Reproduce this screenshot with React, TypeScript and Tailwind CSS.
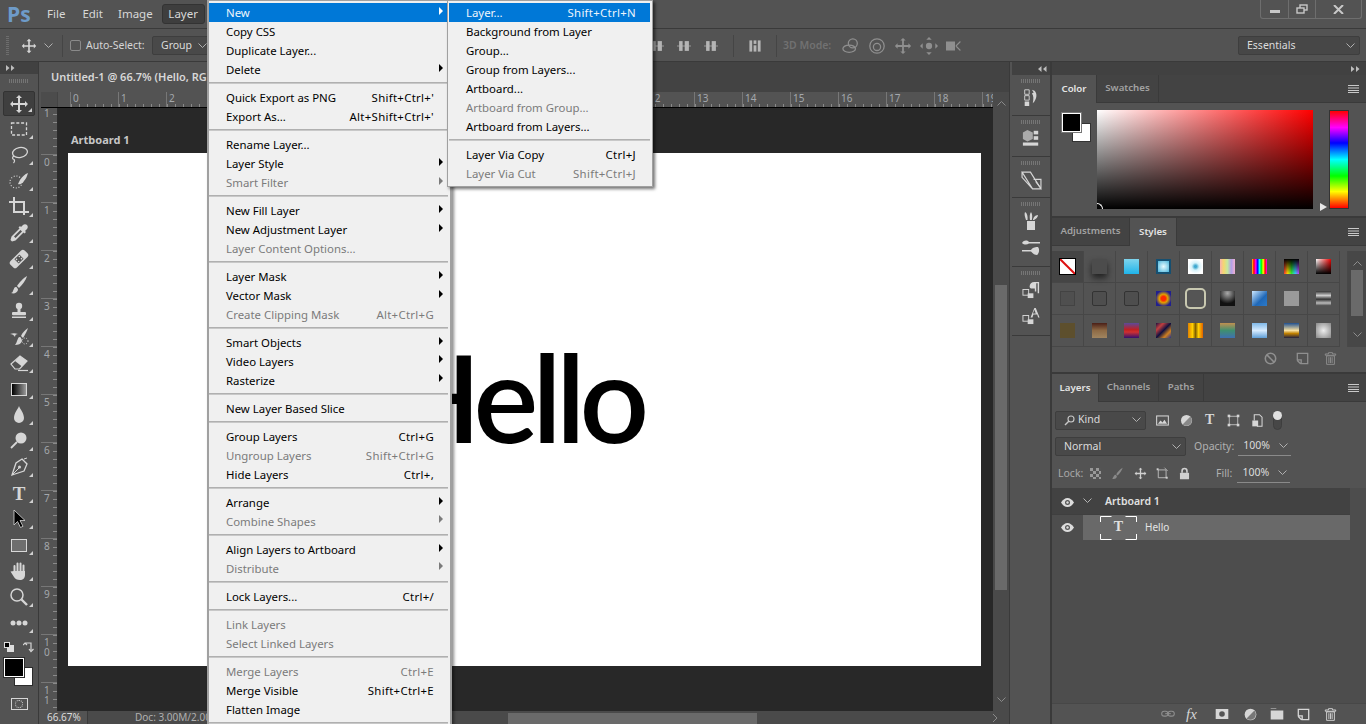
import React from "react";

function Ico({ size = 20, className = "", children }: { size?: number; className?: string; children: React.ReactNode }) {
  return (
    <svg width={size} height={size} viewBox="0 0 20 20" fill="currentColor" className={"shrink-0 " + className}>
      {children}
    </svg>
  );
}

const Chevron = ({ className = "" }: { className?: string }) => (
  <svg width="9" height="6" viewBox="0 0 9 6" fill="none" stroke="currentColor" className={"shrink-0 " + className}>
    <path d="M.5 .5l4 4 4-4" />
  </svg>
);

const MoveGlyph = () => (
  <path d="M10 1l3 3h-2v5h5V7l3 3-3 3v-2h-5v5h2l-3 3-3-3h2v-5H4v2l-3-3 3-3v2h5V4H7z" />
);

const tools: React.ReactNode[] = [
  <Ico><MoveGlyph /></Ico>,
  <Ico><rect x="2.500" y="4" width="15" height="12" fill="none" stroke="currentColor" strokeWidth="1.300" strokeDasharray="3 1.800" /></Ico>,
  <Ico><ellipse cx="11" cy="7.500" rx="7.500" ry="5" fill="none" stroke="currentColor" strokeWidth="1.300" transform="rotate(-10 11 7.500)" /><path d="M5 11c-2 1-2 3 0 3.500 1 1 .5 2.500-.5 3.500" fill="none" stroke="currentColor" strokeWidth="1.200" /></Ico>,
  <Ico><circle cx="7" cy="11" r="6" fill="none" stroke="currentColor" strokeWidth="1.200" strokeDasharray="1 1.800" /><path d="M19 2c-3 1-6 4-8 7l-2 4c2 1 5-1 6-3 2-2 3-5 4-8z" /></Ico>,
  <Ico><path d="M0 5h15v13M5 0v15h15" fill="none" stroke="currentColor" strokeWidth="2" /></Ico>,
  <Ico><path d="M14 2c1-1 3-1 4 0s1 3 0 4l-2 2 1 1-1.500 1.500-1-1-8 8-3.500 1-1.500-1.500 1-3.500 8-8-1-1L11 3l1 1z" /><path d="M5 13.500l6.500-6.500 1.500 1.500-6.500 6.500z" fill="#535353" /></Ico>,
  <Ico><g transform="rotate(45 10 10)"><rect x="5.500" y="0" width="9" height="20" rx="2.500" /><rect x="7" y="6.500" width="6" height="7" fill="#535353" /><circle cx="8.500" cy="8" r=".8" /><circle cx="11.500" cy="8" r=".8" /><circle cx="8.500" cy="12" r=".8" /><circle cx="11.500" cy="12" r=".8" /></g></Ico>,
  <Ico><path d="M18 1C14 3 10 8 8 11l2 2c3-3 7-8 8-12z" /><path d="M7 12c-2 0-2 2-3 4-.3 1-1 2-2 2 3 1 6 0 7-3 0-1-1-3-2-3z" /></Ico>,
  <Ico><circle cx="10" cy="5" r="3.200" /><rect x="8.500" y="7" width="3" height="4" /><rect x="3" y="11" width="14" height="3.200" rx="1" /><rect x="3" y="15.500" width="14" height="1.500" /></Ico>,
  <Ico><path d="M19 1c-3 2-6 5-7 8l2 2c2-3 4-7 5-10z" /><path d="M11 10c-2 0-2 2-3 4-.3 1-1 3-2 4 3 0 6-1 7-4 0-1-1-4-2-4z" /><path d="M1 7c3-1 5-1 8 0-2 0-3 1-3 3-1-2-3-3-5-3z" /><circle cx="16" cy="14" r="3" fill="none" stroke="currentColor" strokeDasharray="1 1.500" /></Ico>,
  <Ico><path d="M2 11L11 3l7 5-7.500 8H6z" fill="none" stroke="currentColor" strokeWidth="1.200" /><path d="M11 3l7 5-5 5.500-7-5.500z" /><path d="M9 17.500h10" stroke="currentColor" strokeWidth="1.200" /></Ico>,
  <div className="w-[16px] h-[13px] border border-[#d8d8d8] bg-[linear-gradient(to_right,#000,#9a9a9a)]" />,
  <Ico><path d="M10 1c1 3 5 7 5 12a5 5 0 01-10 0c0-5 4-9 5-12z" /></Ico>,
  <Ico><circle cx="12" cy="7" r="5.500" /><path d="M8 11l-6 6" stroke="currentColor" strokeWidth="1.800" /></Ico>,
  <Ico><path d="M13 2l5 5-3 7-9 3-3 1 1-3 3-9z" fill="none" stroke="currentColor" strokeWidth="1.300" /><path d="M4 17l6-6M15 2l3-1" stroke="currentColor" /><circle cx="10.500" cy="10" r="1.500" /></Ico>,
  <span className="font-['Liberation_Serif',serif] font-bold text-[19px] leading-none">T</span>,
  <Ico><path d="M5 1v15l3.500-3.500 3 6 2.500-1.200-3-5.800H16z" fill="#000" stroke="#d8d8d8" strokeWidth=".8" /></Ico>,
  <div className="w-[16px] h-[13px] border border-[#d8d8d8] bg-[#6e6e6e]" />,
  <Ico><path d="M5.500 11V5M8.500 10V2.500M11.500 10V2.500M14.500 11V4.500" stroke="currentColor" strokeWidth="2" strokeLinecap="round" /><path d="M1.500 10.500L5 10h11v4c0 3-2 5-5 5-3 0-5-1-6-3z" /></Ico>,
  <Ico><circle cx="8" cy="8" r="6" fill="none" stroke="currentColor" strokeWidth="1.500" /><path d="M12.500 12.500L18 18" stroke="currentColor" strokeWidth="2.400" /></Ico>,
  <Ico><circle cx="4" cy="10" r="2.500" /><circle cx="10" cy="10" r="2.500" /><circle cx="16" cy="10" r="2.500" /></Ico>,
];

function ToolsBar() {
  return (
    <div className="w-[39px] shrink-0 flex flex-col items-center border-r border-[#3a3a3a] bg-[#535353]">
      <div className="w-full h-[12px] bg-[#414141] flex items-center pl-[6px] text-[#bdbdbd] text-[7px] leading-none">
        <svg width="9" height="6" viewBox="0 0 9 6" fill="currentColor"><path d="M0 0l3.500 3L0 6zM5 0l3.500 3L5 6z" /></svg>
      </div>
      <Grip className="mt-[5px] mb-[8px] w-[20px]" />
      {tools.map((t, i) => (
        <div
          key={i}
          className={
            "relative w-[32px] flex items-center justify-center text-[#d6d6d6] " +
            (i === 0 ? "h-[25px] bg-[#3f3f3f] border border-[#333] rounded-[2px]" : "h-[26px]")
          }
        >
          {t}
          <span className="absolute right-[2px] bottom-[3px] w-0 h-0 border-l-[4px] border-l-transparent border-b-[4px] border-b-[#cfcfcf]" />
        </div>
      ))}
      <div className="w-full flex items-center justify-between px-[4px] mt-[5px] h-[12px] text-[#d6d6d6]">
        <div className="relative w-[10px] h-[10px]">
          <span className="absolute right-0 bottom-0 w-[7px] h-[7px] bg-[#ddd]" />
          <span className="absolute left-0 top-0 w-[6px] h-[6px] bg-black border border-[#ddd]" />
        </div>
        <svg width="11" height="11" viewBox="0 0 11 11" fill="none" stroke="currentColor" strokeWidth="1.200"><path d="M2 1.500v0M0 3l2-2 2 2M2 1h6v7M6 7l2 2.500L10.500 7" /></svg>
      </div>
      <div className="relative w-full h-[28px] mt-[5px]">
        <span className="absolute left-[14px] top-[9px] w-[19px] h-[19px] bg-white border border-[#2c2c2c]" />
        <span className="absolute left-[4px] top-0 w-[20px] h-[19px] bg-black border border-white outline outline-[#2c2c2c]" />
      </div>
      <div className="mt-[12px] w-[17px] h-[12px] border border-[#d6d6d6] flex items-center justify-center">
        <span className="w-[8px] h-[8px] rounded-full border border-dotted border-[#d6d6d6]" />
      </div>
    </div>
  );
}

function Grip({ className = "" }: { className?: string }) {
  return <div className={"h-[4px] bg-[repeating-linear-gradient(to_right,#757575_0,#757575_1px,transparent_1px,transparent_2px)] " + className} />;
}

function PanelMenu() {
  return (
    <svg width="11" height="8" viewBox="0 0 11 8" fill="#c9c9c9" className="ml-auto mr-[7px] self-center">
      <rect width="11" height="1" /><rect y="2.500" width="11" height="1" /><rect y="5" width="11" height="1" /><rect y="7" width="11" height="1" />
    </svg>
  );
}

function Tabs({ tabs, active, widths }: { tabs: string[]; active: number; widths: string[] }) {
  return (
    <div className="h-[28px] flex bg-[#434343] border-b border-[#3a3a3a] shrink-0">
      {tabs.map((t, i) => (
        <div
          key={t}
          className={
            "flex items-center justify-center text-[9.700px] font-semibold border-r border-[#3a3a3a] " +
            widths[i] +
            (i === active ? " bg-[#535353] text-[#e4e4e4] h-[28px]" : " text-[#a2a2a2]")
          }
        >
          {t}
        </div>
      ))}
      <PanelMenu />
    </div>
  );
}

const swatches: string[] = [
  "bg-white",
  "bg-[#4c4c4c] shadow-[0_4px_6px_#222]",
  "bg-[linear-gradient(to_bottom,#7fd4ec,#1fb4ea)]",
  "bg-[radial-gradient(circle,#e8fbff,#4ab4da)] border-2 border-[#164f70]",
  "bg-[radial-gradient(circle,#3fa9d0_10%,#d4f2fa_35%,#fff_70%)]",
  "bg-[linear-gradient(to_right,#f7b0b0,#f5d76e,#c4e6a0,#b0a0e8,#f0b0d0)]",
  "bg-[linear-gradient(to_right,#f9d423,#f00,#f0f,#00f,#0ff,#0f0,#ff0,#f00,#f0f)]",
  "bg-[linear-gradient(to_bottom,#000,transparent),linear-gradient(to_right,#f33,#fd0,#3e3,#3cf,#c3f)]",
  "bg-[linear-gradient(to_bottom,transparent,#000),linear-gradient(to_right,#fff,#e00)]",
  "bg-[#4f4f4f] border border-[#434343]",
  "bg-[#4e4e4e] border border-[#333] rounded-[2px]",
  "bg-[#4e4e4e] border border-[#333] rounded-[2px]",
  "bg-[radial-gradient(circle,#ff2a00_20%,#e0a000_40%,#20208f_75%)]",
  "bg-[#555] outline-2 outline-offset-1 outline-[#c8c8b0] rounded-[2px]",
  "bg-[radial-gradient(circle_at_50%_15%,#aaa,#111_70%)]",
  "bg-[linear-gradient(135deg,#cde8ff,#1f68b8_60%,#2c7ac9)]",
  "bg-[#9a9a9a]",
  "bg-[linear-gradient(to_bottom,#333,#ccc_30%,#333_55%,#bbb_80%,#444)]",
  "bg-[#5d4f2d]",
  "bg-[linear-gradient(to_bottom,#4a1f17,#8e6a45_50%,#a08560)]",
  "bg-[linear-gradient(to_bottom,#5a4a9a,#c02020_45%,#d03030_60%,#301070)]",
  "bg-[linear-gradient(135deg,#201040,#c04040,#101040,#d08020,#203090)]",
  "bg-[linear-gradient(to_right,#e08000,#ffd000_30%,#806000_50%,#ffd000_70%,#e06000)]",
  "bg-[linear-gradient(to_bottom,#c09050,#3f8f70_50%,#3f70b0)]",
  "bg-[linear-gradient(to_bottom,#7fb8e8,#d8ecff_50%,#5f9fd8)]",
  "bg-[linear-gradient(to_bottom,#1f4f8f,#f8e0a0_50%,#c08000_70%,#202040)]",
  "bg-[radial-gradient(circle,#eee,#888)]",
];

function ColorPanel() {
  return (
    <div className="h-[141px] shrink-0 flex flex-col">
      <Tabs tabs={["Color", "Swatches"]} active={0} widths={["w-[45px]", "w-[62px]"]} />
      <div className="flex-1 flex pt-[7px] pl-[10px]">
        <div className="relative w-[35px] h-[32px] mt-[3px]">
          <span className="absolute left-[10px] top-[10px] w-[19px] h-[19px] bg-white border border-[#333]" />
          <span className="absolute left-0 top-0 w-[19px] h-[19px] bg-black border border-white outline outline-[#777]" />
        </div>
        <div className="w-[216px] h-[99px] relative bg-[linear-gradient(to_top,#000,transparent),linear-gradient(to_right,#fff,#f00)]">
          <span className="absolute left-0 bottom-0 w-[6px] h-[6px] rounded-tr-full border-t border-r border-white" />
        </div>
        <div className="relative ml-[16px] w-[20px] h-[99px] bg-[linear-gradient(to_bottom,#f00,#f0f_17%,#00f_33%,#0ff_50%,#0f0_67%,#ff0_83%,#f00)] border border-[#333]">
          <span className="absolute left-[-10px] bottom-[-3px] w-0 h-0 border-y-[4px] border-y-transparent border-l-[7px] border-l-[#e8e8e8]" />
        </div>
      </div>
    </div>
  );
}

function StylesPanel() {
  return (
    <div className="h-[154px] shrink-0 flex flex-col border-t-2 border-[#3a3a3a]">
      <Tabs tabs={["Adjustments", "Styles"]} active={1} widths={["w-[78px]", "w-[47px]"]} />
      <div className="flex h-[96px] mt-[5px]">
        <div className="grid grid-cols-[repeat(9,32px)] grid-rows-[repeat(3,32px)] w-[296px] border-r border-[#484848]">
          <div className="bg-[#454545] border-r border-b border-[#474747] flex items-center justify-center">
            <div className="relative w-[17px] h-[17px] bg-white border border-black overflow-hidden">
              <svg width="17" height="17" viewBox="0 0 17 17" className="absolute -left-px -top-px"><path d="M0 0l17 17" stroke="#d11" strokeWidth="2" /></svg>
            </div>
          </div>
          {swatches.slice(1).map((s, i) => (
            <div key={i} className="border-r border-b border-[#474747] flex items-center justify-center">
              <div className={"w-[15px] h-[15px] " + s} />
            </div>
          ))}
        </div>
        <div className="ml-auto w-[18px] bg-[#474747] flex flex-col items-center text-[#8d8d8d]">
          <Chevron className="mt-[9px] rotate-180" />
          <div className="w-[12px] h-[46px] bg-[#6a6a6a] mt-[4px]" />
          <Chevron className="mt-[16px]" />
        </div>
      </div>
      <div className="flex-1 flex items-center text-[#8f8f8f] pl-[212px] gap-[16px]">
        <Ico size={13}><circle cx="10" cy="10" r="8" fill="none" stroke="currentColor" strokeWidth="2.400" /><path d="M4.500 4.500l11 11" stroke="currentColor" strokeWidth="2.400" /></Ico>
        <Ico size={13} className="ml-[3px]"><path d="M2 2h16v16H8v-6H2zM2 13l5 5" fill="none" stroke="currentColor" strokeWidth="2" /></Ico>
        <Trash className="-ml-[1px]" />
      </div>
    </div>
  );
}

function Trash({ className = "" }: { className?: string }) {
  return (
    <Ico size={13} className={className}>
      <path d="M7 1h6v2h5v2H2V3h5zM4 6h12v13H4zM7.500 8v9M10 8v9M12.500 8v9" fill="none" stroke="currentColor" strokeWidth="1.400" />
    </Ico>
  );
}

function Select({ label, className, icon }: { label: string; className: string; icon?: React.ReactNode }) {
  return (
    <div className={"h-[19px] flex items-center border border-[#3e3e3e] rounded-[2px] text-[#dcdcdc] text-[10.500px] " + className}>
      {icon}
      <span>{label}</span>
      <Chevron className="ml-auto mr-[4px] text-[#b0b0b0]" />
    </div>
  );
}

function Underlined({ value }: { value: string }) {
  return (
    <div className="w-[53px] h-[18px] flex items-center pl-[5px] border-b border-[#8a8a8a] text-[#dcdcdc] text-[10.500px]">
      {value}
      <Chevron className="ml-auto mr-[3px] text-[#b0b0b0]" />
    </div>
  );
}

const Eye = () => (
  <svg width="13" height="9" viewBox="0 0 13 9" className="shrink-0">
    <path d="M0 4.500C2 1.500 4 0 6.500 0S11 1.500 13 4.500C11 7.500 9 9 6.500 9S2 7.500 0 4.500z" fill="#dcdcdc" />
    <circle cx="6.500" cy="4.500" r="2.500" fill="#555" />
    <circle cx="6.500" cy="4.500" r="1.200" fill="#dcdcdc" />
  </svg>
);

function LayersPanel() {
  return (
    <div className="flex-1 flex flex-col border-t-2 border-[#3a3a3a] mt-[2px]">
      <Tabs tabs={["Layers", "Channels", "Paths"]} active={0} widths={["w-[47px]", "w-[60px]", "w-[45px]"]} />
      <div className="h-[34px] pt-[2px] flex items-center pl-[3px] text-[#d6d6d6]">
        <Select
          label="Kind"
          className="w-[91px] bg-[#494949]"
          icon={
            <svg width="11" height="11" viewBox="0 0 11 11" fill="none" stroke="#c8c8c8" strokeWidth="1.100" className="ml-[8px] mr-[3px]"><circle cx="7" cy="4" r="3" /><path d="M5 6l-4 4" strokeWidth="1.500" /></svg>
          }
        />
        <Ico size={13} className="ml-[10px]"><rect x="1" y="3" width="18" height="14" fill="none" stroke="currentColor" strokeWidth="1.600" /><path d="M3 15l4-5 3 3 3-4 4 6z" /></Ico>
        <Ico size={13} className="ml-[11px]"><circle cx="10" cy="10" r="8.500" /><path d="M16 4L4 16a8.500 8.500 0 0012-12z" fill="#888" /></Ico>
        <span className="ml-[12px] w-[13px] font-['Liberation_Serif',serif] font-bold text-[14px] leading-none">T</span>
        <Ico size={13} className="ml-[9px]"><path d="M3.500 3.500h13v13h-13z" fill="none" stroke="currentColor" strokeWidth="1.200" /><rect x="1" y="1" width="4" height="4" /><rect x="15" y="1" width="4" height="4" /><rect x="1" y="15" width="4" height="4" /><rect x="15" y="15" width="4" height="4" /></Ico>
        <Ico size={13} className="ml-[11px]"><path d="M5 10V1h8l4 4v14H9" fill="none" stroke="currentColor" strokeWidth="1.600" /><rect x="2" y="10" width="9" height="9" /></Ico>
        <div className="ml-[9px] w-[9px] h-[19px] rounded-full border border-[#3e3e3e] bg-[#474747] relative">
          <span className="absolute -left-px -top-px w-[9px] h-[9px] rounded-full bg-[#e0e0e0]" />
        </div>
      </div>
      <div className="h-[20px] pt-[1px] flex items-center pl-[3px]">
        <Select label="Normal" className="w-[131px] pl-[8px] bg-[#494949]" />
        <span className="ml-[8px] text-[#b0b0b0] text-[10.500px]">Opacity:</span>
        <div className="ml-[4px]"><Underlined value="100%" /></div>
      </div>
      <div className="h-[32px] pt-[3px] flex items-center pl-[6px] text-[#d0d0d0]">
        <span className="text-[#a8a8a8] text-[10.500px] w-[30px]">Lock:</span>
        <div className="ml-[2px] w-[11px] h-[11px] bg-[conic-gradient(#555_25%,#999_0_50%,#555_0_75%,#999_0)] bg-[length:6px_6px]" />
        <Ico size={13} className="ml-[10px] text-[#8a8a8a]"><path d="M18 1C14 3 10 8 8 11l2 2c3-3 7-8 8-12zM7 12c-2 0-3 3-5 6 3 1 6 0 7-3 0-1-1-3-2-3z" /></Ico>
        <Ico size={13} className="ml-[10px]"><MoveGlyph /></Ico>
        <Ico size={13} className="ml-[9px]"><path d="M3.500 4.500h12v12h-12z" fill="none" stroke="currentColor" strokeWidth="1.200" /><rect x="1" y="2" width="3" height="3" /><rect x="15" y="15" width="3" height="3" /><path d="M13 1l5 5" stroke="currentColor" /></Ico>
        <Ico size={13} className="ml-[9px]"><path d="M5 9V6a5 5 0 0110 0v3h-2.500V6a2.500 2.500 0 00-5 0v3z" /><rect x="3" y="9" width="14" height="10" rx="1" /></Ico>
        <span className="ml-[25px] text-[#b0b0b0] text-[10.500px]">Fill:</span>
        <div className="ml-[5px]"><Underlined value="100%" /></div>
      </div>
      <div className="flex-1 bg-[#4d4d4d] flex flex-col">
        <div className="w-[298px] h-[26px] pt-[2px] bg-[#424242] flex items-center">
          <div className="w-[31px] flex justify-center"><Eye /></div>
          <Chevron className="text-[#b5b5b5] -mt-[2px]" />
          <span className="ml-[13px] text-[#e0e0e0] font-semibold text-[10.500px]">Artboard 1</span>
        </div>
        <div className="w-[298px] h-[26px] flex items-center border-t border-[#3f3f3f]">
          <div className="w-[31px] flex justify-center"><Eye /></div>
          <div className="flex-1 h-full bg-[#696969] flex items-center">
            <svg width="37" height="24" viewBox="0 0 37 24" fill="none" stroke="#fff" className="ml-[17px] shrink-0">
              <path d="M.5 6V.5H11.500M25.500 .5H36.500V6M.5 18v5.500H11.500M25.500 23.500H36.500V18" />
              <text x="18.500" y="15" textAnchor="middle" stroke="none" fill="#e0e0e0" fontFamily="Liberation Serif" fontWeight="700" fontSize="14">T</text>
            </svg>
            <span className="ml-[8px] text-[#e4e4e4] text-[10px]">Hello</span>
          </div>
        </div>
      </div>
      <div className="h-[21px] border-t border-[#474747] flex items-center text-[#d6d6d6] pl-[109px]">
        <Ico size={14} className="text-[#8f8f8f]"><rect x="1" y="6" width="9" height="7" rx="3.500" fill="none" stroke="currentColor" strokeWidth="1.500" /><rect x="10" y="6" width="9" height="7" rx="3.500" fill="none" stroke="currentColor" strokeWidth="1.500" /><path d="M6 9.500h8" stroke="currentColor" strokeWidth="1.500" /></Ico>
        <span className="ml-[11px] w-[19px] font-['Liberation_Serif',serif] italic text-[15px] leading-none">fx</span>
        <Ico size={14} className="ml-[10px]"><path fillRule="evenodd" d="M1 3h18v14H1zM10 6a4 4 0 100 8 4 4 0 000-8z" /></Ico>
        <Ico size={13} className="ml-[15px]"><circle cx="10" cy="10" r="9" /><path d="M16 4L4 16a8.500 8.500 0 0012-12z" fill="#777" /></Ico>
        <Ico size={14} className="ml-[13px]"><path d="M1 2h8v1H1zM1 5h18v13H1z" /></Ico>
        <Ico size={13} className="ml-[13px]"><path d="M2 2h16v16H8v-6H2zM2 13l5 5" fill="none" stroke="currentColor" strokeWidth="2" /></Ico>
        <Trash className="ml-[14px]" />
      </div>
    </div>
  );
}

const dockGroups: { h: string; items: React.ReactNode[] }[] = [
  { h: "h-[41px]", items: [<Ico size={18}><path d="M3 2h5v5H3zM3 8.500h5v5H3z" fill="none" stroke="currentColor" /><rect x="3" y="15" width="5" height="5" /><path d="M11 2l3 1c3 3 3 9-2 14 1-5 1-9-1-11l2-1z" /></Ico>] },
  { h: "h-[41px]", items: [<Ico size={18}><path d="M6 1l6 3v7l-6 3-5-3V4z" fill="#aaa" /><rect x="13" y="2" width="5" height="4" /><rect x="13" y="8" width="5" height="4" /><rect x="1" y="15" width="17" height="3.500" /></Ico>] },
  { h: "h-[41px]", items: [<Ico size={21}><path d="M1 2h8l10 16h-8zM1 2l0 5 10 11M12 9h7v9" fill="none" stroke="currentColor" strokeWidth="1.100" /><path d="M14 11l4 5" stroke="currentColor" /></Ico>] },
  {
    h: "h-[69px]",
    items: [
      <Ico size={20}><path d="M4 1c2 1 3 4 2.500 8H5C4 6 3 3 4 1zM10 1c1.500 2 1.500 5 .8 8H9C8.500 6 8.500 3 10 1zM17 4c0 2-2 4-4 5h-1c0-2 2-5 5-5z" /><rect x="6" y="10" width="8" height="9" /></Ico>,
      <Ico size={20}><path d="M1 5c2-3 5-3 7-1h11v1.500H8C6 7 3 7 1 5zM1 12h9c2-3 5-3 7-3 2 2 1 7-1 8-2 0-4-1-6-3.500H1z" /></Ico>,
    ],
  },
  {
    h: "h-[69px]",
    items: [
      <Ico size={19}><rect x="1" y="10" width="6" height="6" fill="none" stroke="currentColor" /><rect x="6" y="14" width="6" height="5" /><path d="M8 7c0-3 2-5 5-5h5v12h-1.500V3.500H15V12h-1.500V9C10 9 8 9 8 7z" /></Ico>,
      <Ico size={19}><rect x="1" y="10" width="6" height="6" fill="none" stroke="currentColor" /><rect x="6" y="14" width="6" height="5" /><path d="M9 12l4-10h1.500l4 10h-1.500l-1-3h-4l-1 3zM11.500 8h3l-1.500-4z" /></Ico>,
    ],
  },
];

function Dock() {
  return (
    <div className="w-[38px] shrink-0 flex flex-col">
      <div className="h-[13px] bg-[#414141] flex items-center justify-end pr-[3px]">
        <svg width="9" height="6" viewBox="0 0 9 6" fill="#bdbdbd"><path d="M3.500 0L0 3l3.500 3zM8.500 0L5 3l3.500 3z" /></svg>
      </div>
      {dockGroups.map((g, i) => (
        <div key={i} className={"flex flex-col items-center border-b border-[#3a3a3a] text-[#d6d6d6] " + g.h}>
          <Grip className="w-[20px] mt-[4px] mb-[5px]" />
          <div className="flex flex-col items-center gap-[7px]">{g.items}</div>
        </div>
      ))}
    </div>
  );
}

type Item = { t: string; s?: string; a?: boolean; off?: boolean; hi?: boolean };

const menu: Item[][] = [
  [{ t: "New", a: true, hi: true }, { t: "Copy CSS" }, { t: "Duplicate Layer..." }, { t: "Delete", a: true }],
  [{ t: "Quick Export as PNG", s: "Shift+Ctrl+'" }, { t: "Export As...", s: "Alt+Shift+Ctrl+'" }],
  [{ t: "Rename Layer..." }, { t: "Layer Style", a: true }, { t: "Smart Filter", a: true, off: true }],
  [{ t: "New Fill Layer", a: true }, { t: "New Adjustment Layer", a: true }, { t: "Layer Content Options...", off: true }],
  [{ t: "Layer Mask", a: true }, { t: "Vector Mask", a: true }, { t: "Create Clipping Mask", s: "Alt+Ctrl+G", off: true }],
  [{ t: "Smart Objects", a: true }, { t: "Video Layers", a: true }, { t: "Rasterize", a: true }],
  [{ t: "New Layer Based Slice" }],
  [{ t: "Group Layers", s: "Ctrl+G" }, { t: "Ungroup Layers", s: "Shift+Ctrl+G", off: true }, { t: "Hide Layers", s: "Ctrl+," }],
  [{ t: "Arrange", a: true }, { t: "Combine Shapes", a: true, off: true }],
  [{ t: "Align Layers to Artboard", a: true }, { t: "Distribute", a: true, off: true }],
  [{ t: "Lock Layers...", s: "Ctrl+/" }],
  [{ t: "Link Layers", off: true }, { t: "Select Linked Layers", off: true }],
  [{ t: "Merge Layers", s: "Ctrl+E", off: true }, { t: "Merge Visible", s: "Shift+Ctrl+E" }, { t: "Flatten Image" }],
];

const submenu: Item[][] = [
  [
    { t: "Layer...", s: "Shift+Ctrl+N", hi: true },
    { t: "Background from Layer" },
    { t: "Group..." },
    { t: "Group from Layers..." },
    { t: "Artboard..." },
    { t: "Artboard from Group...", off: true },
    { t: "Artboard from Layers..." },
  ],
  [{ t: "Layer Via Copy", s: "Ctrl+J" }, { t: "Layer Via Cut", s: "Shift+Ctrl+J", off: true }],
];

function MenuRow({ item }: { item: Item }) {
  return (
    <div
      className={
        "h-[18.900px] flex items-center pl-[17px] " +
        (item.hi ? "bg-[#0078d7] " : "") +
        (item.off ? "text-[#7b7b7b]" : item.hi ? "text-[#eef5fc]" : "text-black")
      }
    >
      <span className="pt-[1px]">{item.t}</span>
      {item.s ? <span className="ml-auto pt-[1px] tracking-[0.3px]">{item.s}</span> : null}
      <span className={"flex justify-center shrink-0 w-[14px]" + (item.s ? "" : " ml-auto")}>
        {item.a ? (
          <span className={"w-0 h-0 border-y-[4px] border-y-transparent border-l-[4px] -mt-[3px] " + (item.hi ? "border-l-white" : item.off ? "border-l-[#7b7b7b]" : "border-l-black")} />
        ) : null}
      </span>
    </div>
  );
}

function MenuSep() {
  return (
    <div className="h-[9.250px] flex items-center">
      <div className="w-full h-[2px] bg-[#b0b0b0] border-b border-[#c8c8c8]" />
    </div>
  );
}

function LayerMenus() {
  return (
    <>
      <div className="absolute left-[207px] top-0 w-[245px] h-[730px] bg-[#f0f0f0] border-x-2 border-t border-[#a0a0a0] pt-[2px] pr-[2px] shadow-[2px_0_3px_rgba(0,0,0,0.45)] font-['Noto_Sans',sans-serif] text-[11.400px] leading-none z-10">
        {menu.map((g, i) => (
          <div key={i}>
            {i > 0 ? <MenuSep /> : null}
            {g.map((it) => (
              <MenuRow key={it.t} item={it} />
            ))}
          </div>
        ))}
        <MenuSep />
      </div>
      <div className="absolute left-[447px] top-0 w-[206px] h-[187px] bg-[#f0f0f0] border border-[#a0a0a0] pt-[2px] pl-[1px] pr-[2px] shadow-[2px_2px_3px_rgba(0,0,0,0.55)] font-['Noto_Sans',sans-serif] text-[11.400px] leading-none z-20">
        {submenu.map((g, i) => (
          <div key={i}>
            {i > 0 ? <MenuSep /> : null}
            {g.map((it) => (
              <MenuRow key={it.t} item={it} />
            ))}
          </div>
        ))}
      </div>
    </>
  );
}

const rulerTicksH = "bg-[repeating-linear-gradient(to_right,#8a8a8a_0,#8a8a8a_1px,transparent_1px,transparent_8px)]";
const rulerTicksV = "bg-[repeating-linear-gradient(to_bottom,#8a8a8a_0,#8a8a8a_1px,transparent_1px,transparent_8px)]";

function HRuler() {
  return (
    <div className="h-[16px] flex bg-[#535353] overflow-hidden shrink-0 border-b border-black">
      <div className="w-[17px] shrink-0 border-r border-[#444] bg-[#4c4c4c]" />
      <div className="w-[12px] shrink-0" />
      {Array.from({ length: 20 }, (_, i) => (
        <div key={i} className="w-[48px] shrink-0 h-full border-l border-[#777] flex flex-col">
          <span className="h-[12px] pl-[2px] text-[10px] leading-[12px] text-[#a4a8ac]">{i}</span>
          <div className={"h-[3px] " + rulerTicksH} />
        </div>
      ))}
    </div>
  );
}

function VRuler() {
  const labels = ["1", "0", "1", "2", "3", "4", "5", "6", "7", "8", "9", "10", "11", "12"];
  return (
    <div className="w-[17px] shrink-0 bg-[#535353] overflow-hidden flex flex-col border-r border-[#2a2a2a]">
      <div className="-mt-[2px]">
        {labels.map((l, i) => (
          <div key={i} className={"h-[48px] flex justify-between " + (i === 0 ? "" : "border-t border-[#777]")}>
            <span className="w-[10px] pl-[3px] pt-[2px] text-[10px] leading-[10px] text-[#a4a8ac] flex flex-col">
              {l.split("").map((c, k) => (
                <span key={k}>{c}</span>
              ))}
            </span>
            <div className={"w-[4px] " + rulerTicksV} />
          </div>
        ))}
      </div>
    </div>
  );
}

function Document() {
  return (
    <div className="flex-1 min-w-0 flex flex-col border-r border-[#3a3a3a]">
      <div className="h-[30px] shrink-0 bg-[#434343] flex">
        <div className="w-[400px] bg-[#535353] flex items-center pl-[10px] text-[#d8d8d8] font-semibold text-[11px]">
          Untitled-1 @ 66.7% (Hello, RGB/8)
        </div>
      </div>
      <div className="flex-1 min-h-0 flex">
        <div className="flex-1 min-w-0 flex flex-col">
          <HRuler />
          <div className="flex-1 min-h-0 flex">
            <VRuler />
            <div className="flex-1 bg-[#282828] pt-[24px] pl-[10px] pr-[12px]">
              <div className="h-[21px] pl-[3px] text-[11px] font-bold text-[#c6c6c6]">Artboard 1</div>
              <div className="h-[513px] bg-white flex items-center justify-center pb-[26px] pr-[18px] font-['Lato',sans-serif] font-semibold text-[122px] text-black tracking-[-6px]">
                Hello
              </div>
            </div>
          </div>
        </div>
        <div className="w-[16px] shrink-0 bg-[#4a4a4a] flex flex-col items-center text-[#8a8a8a]">
          <Chevron className="mt-[8px] rotate-180" />
          <div className="w-[12px] h-[305px] bg-[#6a6a6a] mt-[179px]" />
          <Chevron className="mt-auto mb-[8px]" />
        </div>
      </div>
      <div className="h-[13px] shrink-0 bg-[#4a4a4a] flex items-stretch text-[#c8c8c8] text-[10px] leading-[13px]">
        <div className="w-[47px] pl-[6px] border-r border-[#3a3a3a] bg-[#535353] text-[#dcdcdc]">66.67%</div>
        <span className="ml-[47px] w-[120px] text-[#b0b0b0] whitespace-nowrap">Doc: 3.00M/2.00M</span>
        <div className="w-[249px] ml-[253px] mt-[2px] bg-[#6a6a6a]" />
        <div className="ml-auto mr-[9px] flex items-center text-[#8a8a8a]">
          <Chevron className="-rotate-90" />
        </div>
      </div>
    </div>
  );
}

const OptIcon = ({ children, w = "w-[27px]" }: { children: React.ReactNode; w?: string }) => (
  <div className={"flex justify-center " + w}>{children}</div>
);

function OptionsBar() {
  return (
    <div className="h-[33px] pt-[1px] shrink-0 flex items-center border-b border-[#3a3a3a] bg-[#535353] text-[#d6d6d6] text-[10.500px]">
      <div className="ml-[6px] w-[3px] h-[20px] bg-[repeating-linear-gradient(to_bottom,#6d6d6d_0,#6d6d6d_1px,transparent_1px,transparent_2px)]" />
      <Ico size={16} className="ml-[12px]"><MoveGlyph /></Ico>
      <Chevron className="ml-[7px] text-[#b0b0b0]" />
      <div className="ml-[9px] w-px h-[22px] bg-[#454545]" />
      <div className="ml-[7px] w-[11px] h-[11px] border border-[#8a8a8a] rounded-[2px]" />
      <span className="ml-[5px] w-[54px] whitespace-nowrap">Auto-Select:</span>
      <Select label="Group" className="ml-[12px] w-[60px] pl-[8px] bg-[#494949]" />
      <div className="ml-[431px] flex items-center text-[#b4b4b4]">
        {[0, 1, 2].map((i) => (
          <OptIcon key={i}>
            <Ico size={14}><rect x="3" y="3" width="5" height="14" /><rect x="11" y="3" width="6" height="14" /><path d="M0 10h20" stroke="currentColor" /></Ico>
          </OptIcon>
        ))}
        <div className="w-px h-[22px] bg-[#454545] ml-[9px]" />
        <OptIcon w="w-[42px]">
          <Ico size={14}><rect x="2" y="2" width="4" height="16" /><rect x="8" y="2" width="4" height="5" /><rect x="8" y="9" width="4" height="9" /><rect x="14" y="2" width="4" height="16" /></Ico>
        </OptIcon>
        <div className="w-px h-[22px] bg-[#454545]" />
        <span className="ml-[6px] w-[59px] text-[#717171] font-semibold whitespace-nowrap">3D Mode:</span>
        <div className="flex items-center gap-[8px] text-[#8f8f8f]">
          <Ico size={18}><circle cx="12" cy="7" r="5" fill="none" stroke="currentColor" strokeWidth="1.400" /><ellipse cx="8" cy="13" rx="7" ry="4" fill="none" stroke="currentColor" strokeWidth="1.400" /></Ico>
          <Ico size={18}><circle cx="10" cy="10" r="8" fill="none" stroke="currentColor" strokeWidth="1.400" /><circle cx="10" cy="11" r="4" fill="none" stroke="currentColor" strokeWidth="1.400" /></Ico>
          <Ico size={18}><MoveGlyph /></Ico>
          <Ico size={18}><path d="M10 0l3 3h-6zM10 20l-3-3h6zM0 10l3-3v6zM20 10l-3 3V7z" /><circle cx="10" cy="10" r="3.500" /></Ico>
          <Ico size={18}><rect x="0" y="5" width="10" height="10" /><path d="M11 10l5-5M11 10l5 5" stroke="currentColor" strokeWidth="1.200" fill="none" /></Ico>
        </div>
      </div>
      <Select label="Essentials" className="ml-auto mr-[6px] w-[122px] pl-[8px] bg-[#474747]" />
    </div>
  );
}

function TopMenuBar() {
  return (
    <div className="h-[29px] shrink-0 flex border-b border-[#3a3a3a] bg-[#535353] text-[#d8d8d8] text-[11.500px]">
      <span className="ml-[7px] w-[29px] text-[21px] leading-[28px] font-bold text-[#6e9bc9] font-['Open_Sans',sans-serif]">Ps</span>
      <div className="ml-[11px] flex items-center">
        <span>File</span>
        <span className="ml-[17px]">Edit</span>
        <span className="ml-[15px]">Image</span>
        <span className="ml-[9px] w-[43px] justify-center h-[20px] flex items-center bg-[#3e3e3e] rounded-[3px] border border-[#333]">Layer</span>
      </div>
      <div className="ml-auto mr-[4px] w-[102px] h-[19px] flex border border-t-0 border-[#6e6e6e] rounded-b-[3px] text-[#c8c8c8]">
        <div className="w-[28px] flex items-center justify-center border-r border-[#6e6e6e]">
          <span className="w-[10px] h-[3px] bg-current mt-[4px]" />
        </div>
        <div className="w-[27px] flex items-center justify-center border-r border-[#6e6e6e]">
          <svg width="12" height="10" viewBox="0 0 12 10" fill="none" stroke="currentColor" strokeWidth="1.400"><rect x="4" y="1" width="7" height="5" /><rect x="1" y="4" width="7" height="5" fill="#535353" /></svg>
        </div>
        <div className="flex-1 flex items-center justify-center">
          <svg width="11" height="9" viewBox="0 0 11 9" stroke="currentColor" strokeWidth="2"><path d="M1 0l9 9M10 0L1 9" /></svg>
        </div>
      </div>
    </div>
  );
}

export default function App() {
  return (
    <div className="relative w-[1366px] h-[724px] overflow-hidden bg-[#535353] flex flex-col font-['Noto_Sans',sans-serif]">
      <TopMenuBar />
      <OptionsBar />
      <div className="flex-1 min-h-0 flex">
        <ToolsBar />
        <div className="w-[2px] shrink-0 bg-[#535353]" />
        <Document />
        <div className="w-[2px] shrink-0 bg-[#535353]" />
        <Dock />
        <div className="w-[2px] shrink-0 bg-[#3a3a3a]" />
        <div className="w-[314px] shrink-0 flex flex-col">
          <div className="h-[13px] shrink-0 bg-[#414141] flex items-center justify-end pr-[6px]">
            <svg width="9" height="6" viewBox="0 0 9 6" fill="#bdbdbd"><path d="M0 0l3.500 3L0 6zM5 0l3.500 3L5 6z" /></svg>
          </div>
          <ColorPanel />
          <StylesPanel />
          <LayersPanel />
        </div>
      </div>
      <LayerMenus />
    </div>
  );
}
